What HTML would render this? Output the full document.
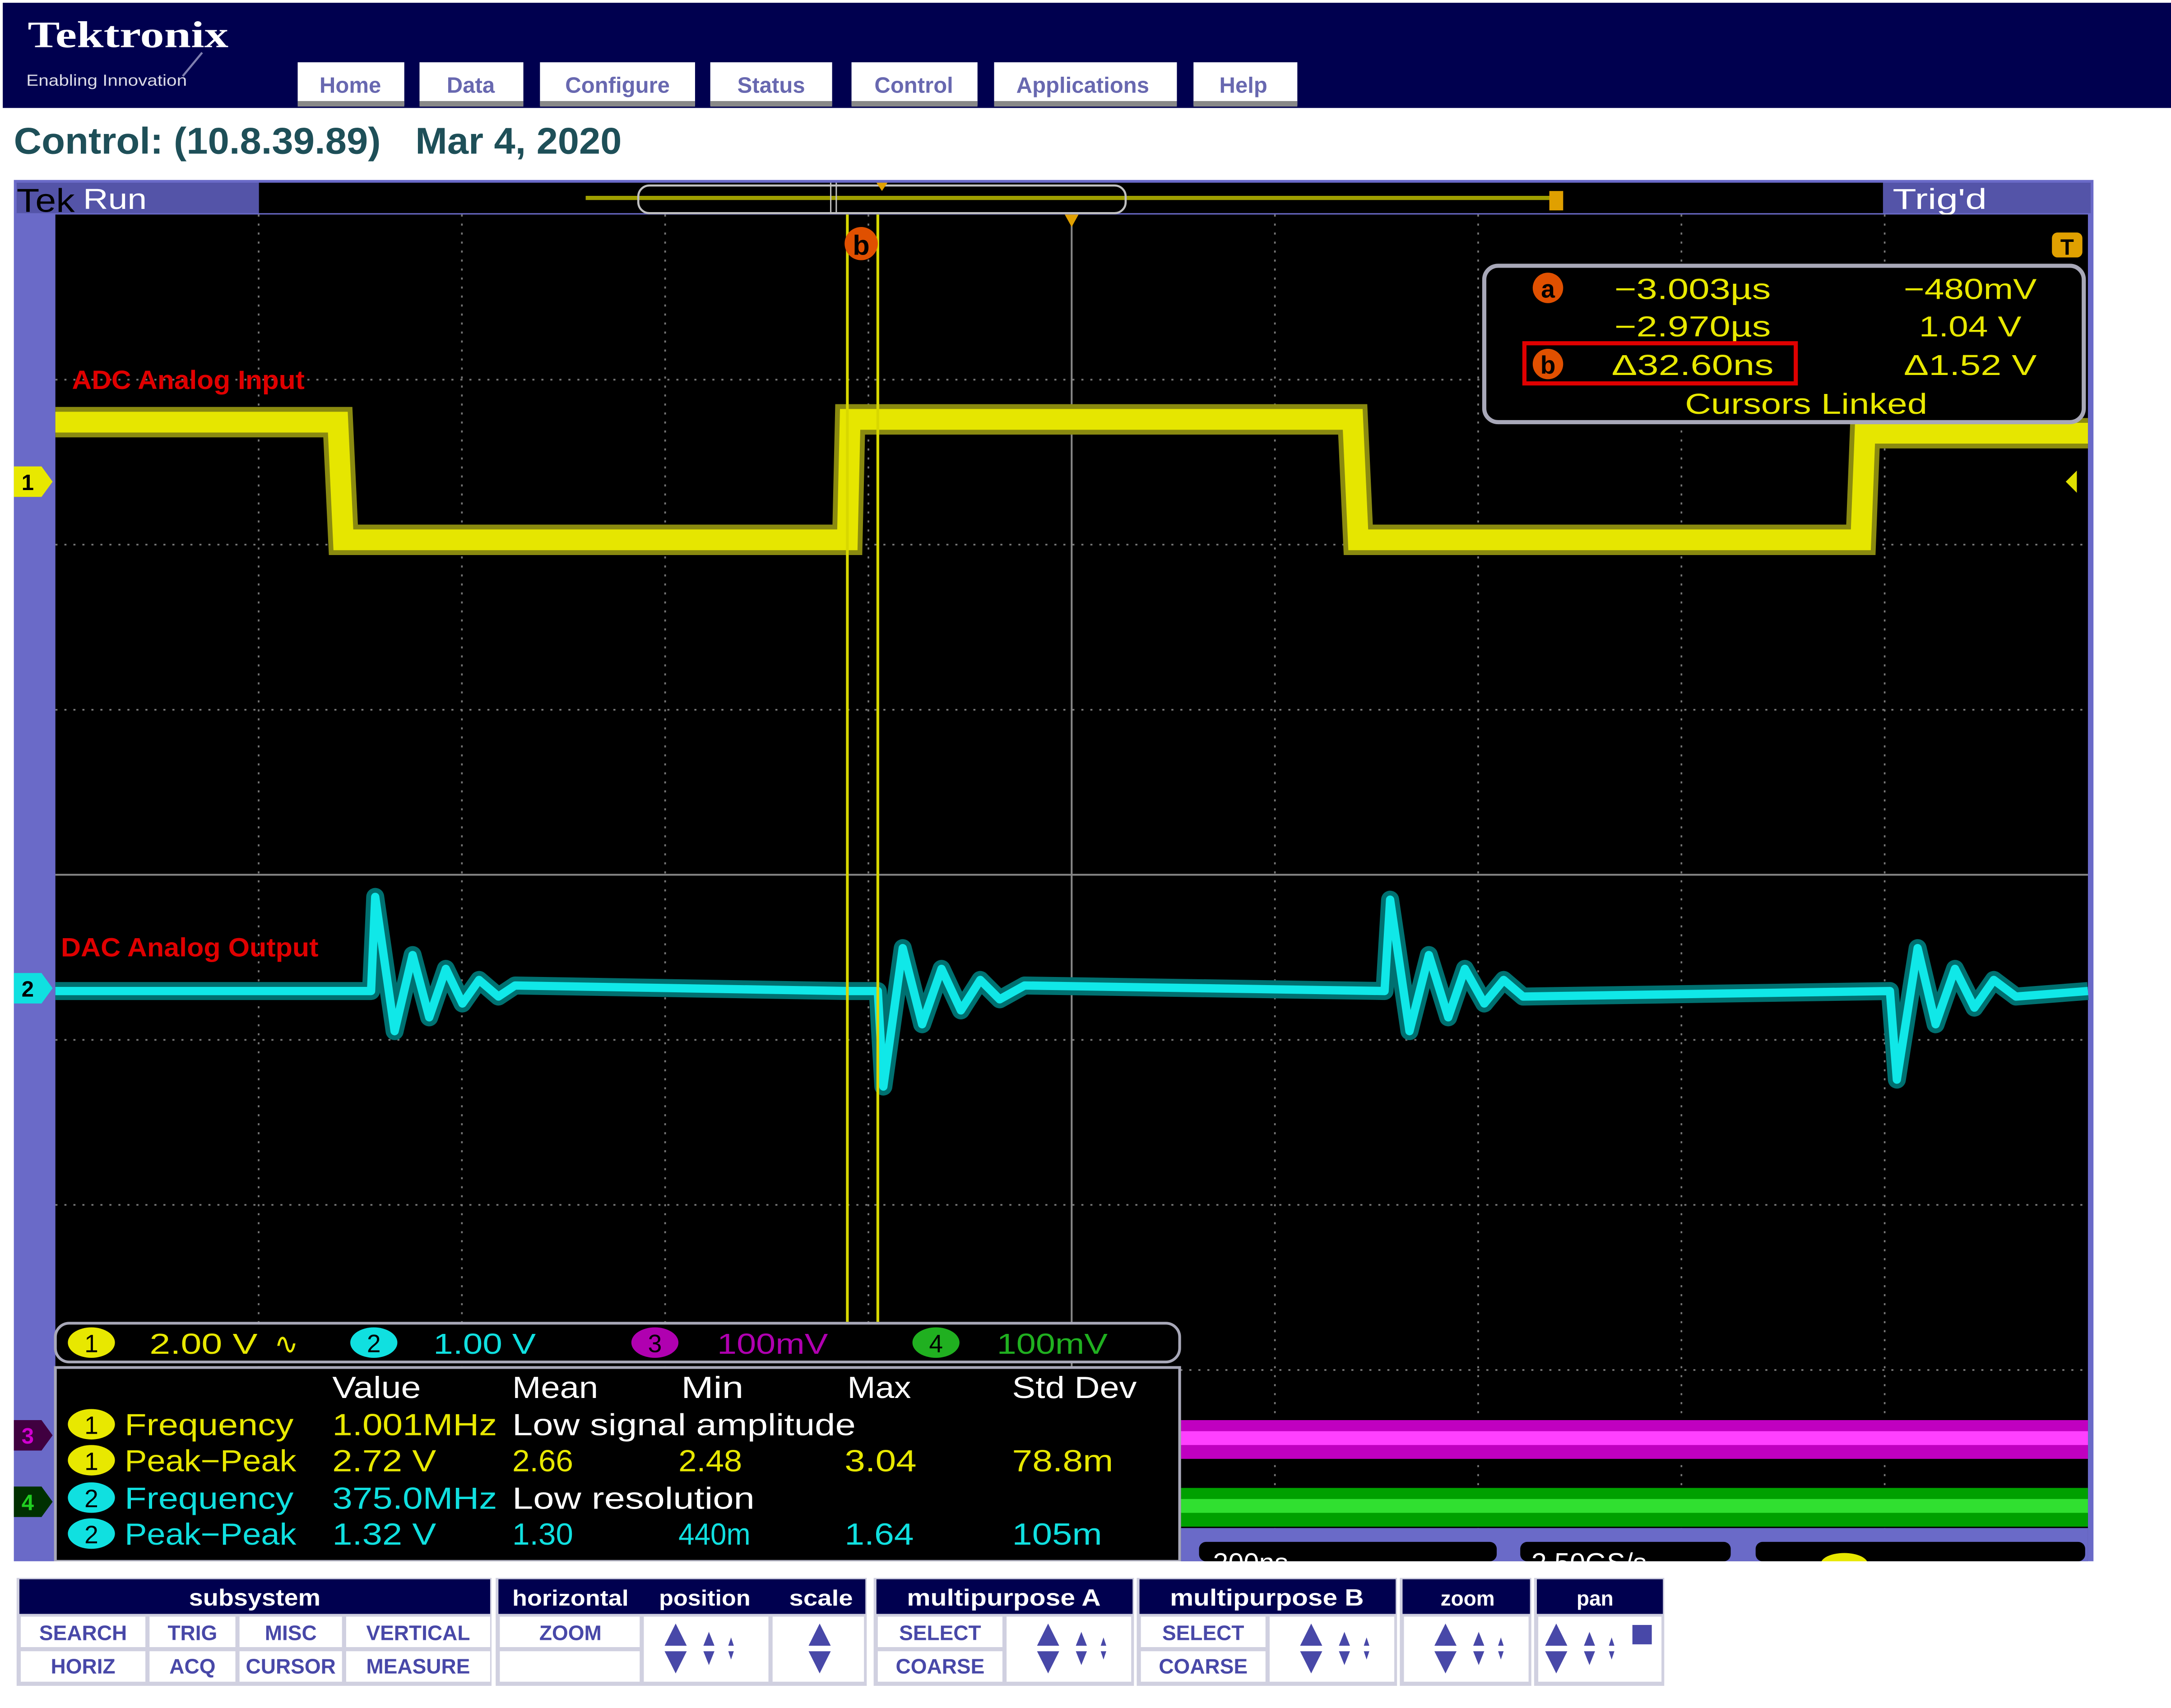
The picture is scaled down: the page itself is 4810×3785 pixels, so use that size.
<!DOCTYPE html>
<html><head><meta charset="utf-8"><style>html,body{margin:0;padding:0;background:#fff}svg{display:block}</style></head><body>
<svg xmlns="http://www.w3.org/2000/svg" xmlns:xlink="http://www.w3.org/1999/xlink" width="4810" height="3785" viewBox="0 0 1568 1234" preserveAspectRatio="none" font-family="Liberation Sans, sans-serif">
<defs>
<g id="ar3"><path d="M-8,-2 L0,-18 L8,-2Z M-8,2 L0,18 L8,2Z" fill="#4848a8"/><path d="M20,-2 L24,-12 L28,-2Z M20,2 L24,12 L28,2Z" fill="#4848a8"/><path d="M38,-2 L40,-8 L42,-2Z M38,2 L40,8 L42,2Z" fill="#4848a8"/></g>
<g id="ar1"><path d="M-8,-2 L0,-18 L8,-2Z M-8,2 L0,18 L8,2Z" fill="#4848a8"/></g>
</defs>
<rect width="1568" height="1234" fill="#fff"/>
<rect x="2" y="2" width="1566" height="76" fill="#00004f"/>
<text x="20" y="34" font-family="Liberation Serif, serif" font-weight="bold" font-size="27" fill="#fff" textLength="145" lengthAdjust="spacingAndGlyphs">Tektronix</text>
<line x1="146" y1="38" x2="132" y2="55" stroke="#8080b0" stroke-width="1.5"/>
<text x="19" y="62" font-size="11.5" fill="#dcdce8" textLength="116" lengthAdjust="spacingAndGlyphs">Enabling Innovation</text>
<g font-size="16" font-weight="bold" fill="#6868b0" text-anchor="middle">
<rect x="215" y="45" width="77" height="31" fill="#fff"/><rect x="215" y="73" width="77" height="4" fill="#888"/><text x="253" y="67">Home</text>
<rect x="303" y="45" width="75" height="31" fill="#fff"/><rect x="303" y="73" width="75" height="4" fill="#888"/><text x="340" y="67">Data</text>
<rect x="390" y="45" width="112" height="31" fill="#fff"/><rect x="390" y="73" width="112" height="4" fill="#888"/><text x="446" y="67">Configure</text>
<rect x="513" y="45" width="88" height="31" fill="#fff"/><rect x="513" y="73" width="88" height="4" fill="#888"/><text x="557" y="67">Status</text>
<rect x="615" y="45" width="91" height="31" fill="#fff"/><rect x="615" y="73" width="91" height="4" fill="#888"/><text x="660" y="67">Control</text>
<rect x="718" y="45" width="132" height="31" fill="#fff"/><rect x="718" y="73" width="132" height="4" fill="#888"/><text x="782" y="67">Applications</text>
<rect x="862" y="45" width="75" height="31" fill="#fff"/><rect x="862" y="73" width="75" height="4" fill="#888"/><text x="898" y="67">Help</text>
</g>
<text x="10" y="111" font-size="27" font-weight="bold" fill="#1e4f58" textLength="265" lengthAdjust="spacingAndGlyphs">Control: (10.8.39.89)</text>
<text x="300" y="111" font-size="27" font-weight="bold" fill="#1e4f58" textLength="149" lengthAdjust="spacingAndGlyphs">Mar 4, 2020</text>
<rect x="10" y="130" width="1502" height="998" fill="#6a6ac8"/>
<rect x="12" y="132" width="175" height="22" fill="#5454a8"/>
<rect x="187" y="132" width="1173" height="22" fill="#000"/>
<rect x="1360" y="132" width="150" height="22" fill="#5454a8"/>
<text x="12" y="153" font-size="24" fill="#000" textLength="42" lengthAdjust="spacingAndGlyphs">Tek</text>
<text x="60" y="151" font-size="21" fill="#fff" textLength="46" lengthAdjust="spacingAndGlyphs">Run</text>
<text x="1367" y="151" font-size="21" fill="#fff" textLength="68" lengthAdjust="spacingAndGlyphs">Trig'd</text>
<line x1="423" y1="143" x2="1125" y2="143" stroke="#a0a000" stroke-width="3"/>
<rect x="461" y="134" width="352" height="20" rx="8" fill="none" stroke="#c0c0c0" stroke-width="1.5"/>
<line x1="600" y1="132" x2="600" y2="154" stroke="#c0c0c0"/><line x1="604" y1="132" x2="604" y2="154" stroke="#c0c0c0"/>
<path d="M633,132 L641,132 L637,138Z" fill="#e0a000"/>
<rect x="1119" y="138" width="10" height="14" fill="#e0a000"/>
<rect x="40" y="155" width="1468" height="973" fill="#000"/>
<g stroke="#777" stroke-width="1.2" stroke-dasharray="1.5 5">
<line x1="186.8" y1="155" x2="186.8" y2="1110"/><line x1="333.6" y1="155" x2="333.6" y2="1110"/><line x1="480.4" y1="155" x2="480.4" y2="1110"/><line x1="627.2" y1="155" x2="627.2" y2="1110"/><line x1="920.8" y1="155" x2="920.8" y2="1110"/><line x1="1067.6" y1="155" x2="1067.6" y2="1110"/><line x1="1214.4" y1="155" x2="1214.4" y2="1110"/><line x1="1361.2" y1="155" x2="1361.2" y2="1110"/>
<line x1="40" y1="274.3" x2="1508" y2="274.3"/><line x1="40" y1="393.5" x2="1508" y2="393.5"/><line x1="40" y1="512.8" x2="1508" y2="512.8"/><line x1="40" y1="751.3" x2="1508" y2="751.3"/><line x1="40" y1="870.5" x2="1508" y2="870.5"/><line x1="40" y1="989.8" x2="1508" y2="989.8"/>
</g>
<g stroke="#888" stroke-width="1.3"><line x1="774" y1="155" x2="774" y2="1110"/><line x1="40" y1="632" x2="1508" y2="632"/></g>
<path d="M769,155 L779,155 L774,164Z" fill="#e0a000"/>
<path d="M40,305 L244,305 L248,390 L612,390 L614,303 L977,303 L981,390 L1344,390 L1347,313 L1508,313" fill="none" stroke="#8a8a10" stroke-width="22"/>
<path d="M40,305 L244,305 L248,390 L612,390 L614,303 L977,303 L981,390 L1344,390 L1347,313 L1508,313" fill="none" stroke="#e6e600" stroke-width="15"/>
<path d="M40,716 L268,716 L271,648 L285,745 L298,690 L310,735 L322,700 L334,725 L346,708 L360,720 L372,712 L612,716 L634,716 L638,785 L652,685 L666,740 L680,700 L694,730 L708,708 L722,722 L740,712 L1000,716 L1004,650 L1018,745 L1032,690 L1046,735 L1058,700 L1072,725 L1086,708 L1100,720 L1365,716 L1370,780 L1385,685 L1398,740 L1412,700 L1426,728 L1440,708 L1456,720 L1508,716" fill="none" stroke="#007070" stroke-width="13" stroke-linejoin="round"/>
<path d="M40,716 L268,716 L271,648 L285,745 L298,690 L310,735 L322,700 L334,725 L346,708 L360,720 L372,712 L612,716 L634,716 L638,785 L652,685 L666,740 L680,700 L694,730 L708,708 L722,722 L740,712 L1000,716 L1004,650 L1018,745 L1032,690 L1046,735 L1058,700 L1072,725 L1086,708 L1100,720 L1365,716 L1370,780 L1385,685 L1398,740 L1412,700 L1426,728 L1440,708 L1456,720 L1508,716" fill="none" stroke="#10e8e8" stroke-width="6" stroke-linejoin="round"/>
<rect x="853" y="1026" width="655" height="28" fill="#c000c0"/><rect x="853" y="1034" width="655" height="10" fill="#ff40ff"/>
<rect x="853" y="1075" width="655" height="28" fill="#00a000"/><rect x="853" y="1083" width="655" height="10" fill="#30e030"/>
<line x1="612" y1="155" x2="612" y2="955" stroke="#d8d800" stroke-width="2"/>
<line x1="634" y1="155" x2="634" y2="955" stroke="#d8d800" stroke-width="2"/>
<circle cx="622" cy="176" r="12" fill="#e05000"/><text x="622" y="184" font-size="20" font-weight="bold" fill="#000" text-anchor="middle">b</text>
<rect x="1482" y="168" width="22" height="18" rx="4" fill="#e0a000"/><text x="1493" y="184" font-size="16" font-weight="bold" fill="#000" text-anchor="middle">T</text>
<path d="M1500,340 L1500,356 L1492,348Z" fill="#e0e000"/>
<text x="52" y="281" font-size="19" font-weight="bold" fill="#e00000" textLength="168" lengthAdjust="spacingAndGlyphs">ADC Analog Input</text>
<text x="44" y="691" font-size="19" font-weight="bold" fill="#e00000" textLength="186" lengthAdjust="spacingAndGlyphs">DAC Analog Output</text>
<g font-size="16" font-weight="bold" text-anchor="middle">
<path d="M10,337 L30,337 L38,348 L30,359 L10,359Z" fill="#e8e800"/><text x="20" y="354" fill="#000">1</text>
<path d="M10,703 L30,703 L38,714 L30,725 L10,725Z" fill="#10e0e0"/><text x="20" y="720" fill="#000">2</text>
<path d="M10,1026 L30,1026 L38,1037 L30,1048 L10,1048Z" fill="#400040"/><text x="20" y="1043" fill="#d000d0">3</text>
<path d="M10,1074 L30,1074 L38,1085 L30,1096 L10,1096Z" fill="#003000"/><text x="20" y="1091" fill="#20d020">4</text>
</g>
<rect x="1072" y="192" width="433" height="113" rx="10" fill="#000" stroke="#a8a8b8" stroke-width="3"/>
<g font-size="21" fill="#e8e800">
<circle cx="1118" cy="208" r="11" fill="#e05000"/><text x="1118" y="215" font-size="18" font-weight="bold" fill="#000" text-anchor="middle">a</text>
<text x="1166" y="216" textLength="113" lengthAdjust="spacingAndGlyphs">−3.003µs</text>
<text x="1375" y="216" textLength="96" lengthAdjust="spacingAndGlyphs">−480mV</text>
<text x="1166" y="243" textLength="113" lengthAdjust="spacingAndGlyphs">−2.970µs</text>
<text x="1386" y="243" textLength="74" lengthAdjust="spacingAndGlyphs">1.04 V</text>
<rect x="1101" y="248" width="196" height="29" fill="none" stroke="#e00000" stroke-width="3"/>
<circle cx="1118" cy="263" r="11" fill="#e05000"/><text x="1118" y="270" font-size="18" font-weight="bold" fill="#000" text-anchor="middle">b</text>
<text x="1164" y="271" textLength="117" lengthAdjust="spacingAndGlyphs">Δ32.60ns</text>
<text x="1375" y="271" textLength="96" lengthAdjust="spacingAndGlyphs">Δ1.52 V</text>
<text x="1217" y="299" textLength="175" lengthAdjust="spacingAndGlyphs">Cursors Linked</text>
</g>
<rect x="40" y="956" width="812" height="28" rx="10" fill="#000" stroke="#a8a8b8" stroke-width="2"/>
<g font-size="21">
<ellipse cx="66" cy="970" rx="17" ry="11" fill="#e8e800"/><text x="66" y="977" text-anchor="middle" fill="#000" font-size="18">1</text>
<text x="108" y="978" fill="#e8e800" textLength="78" lengthAdjust="spacingAndGlyphs">2.00 V</text><text x="198" y="978" fill="#e8e800">∿</text>
<ellipse cx="270" cy="970" rx="17" ry="11" fill="#10e0e0"/><text x="270" y="977" text-anchor="middle" fill="#000" font-size="18">2</text>
<text x="313" y="978" fill="#10e0e0" textLength="74" lengthAdjust="spacingAndGlyphs">1.00 V</text>
<ellipse cx="473" cy="970" rx="17" ry="11" fill="#b000b0"/><text x="473" y="977" text-anchor="middle" fill="#000" font-size="18">3</text>
<text x="518" y="978" fill="#b000b0" textLength="80" lengthAdjust="spacingAndGlyphs">100mV</text>
<ellipse cx="676" cy="970" rx="17" ry="11" fill="#20b020"/><text x="676" y="977" text-anchor="middle" fill="#000" font-size="18">4</text>
<text x="720" y="978" fill="#20b020" textLength="80" lengthAdjust="spacingAndGlyphs">100mV</text>
</g>
<rect x="40" y="988" width="812" height="140" fill="#000" stroke="#a8a8b8" stroke-width="2"/>
<g font-size="22">
<g fill="#fff"><text x="240" y="1010" textLength="64" lengthAdjust="spacingAndGlyphs">Value</text><text x="370" y="1010" textLength="62" lengthAdjust="spacingAndGlyphs">Mean</text><text x="492" y="1010" textLength="45" lengthAdjust="spacingAndGlyphs">Min</text><text x="612" y="1010" textLength="46" lengthAdjust="spacingAndGlyphs">Max</text><text x="731" y="1010" textLength="90" lengthAdjust="spacingAndGlyphs">Std Dev</text></g>
<g font-size="18" text-anchor="middle"><ellipse cx="66" cy="1029" rx="17" ry="11" fill="#e8e800"/><text x="66" y="1036" fill="#000">1</text><ellipse cx="66" cy="1055" rx="17" ry="11" fill="#e8e800"/><text x="66" y="1062" fill="#000">1</text><ellipse cx="66" cy="1082" rx="17" ry="11" fill="#10e0e0"/><text x="66" y="1089" fill="#000">2</text><ellipse cx="66" cy="1108" rx="17" ry="11" fill="#10e0e0"/><text x="66" y="1115" fill="#000">2</text></g>
<g fill="#e8e800"><text x="90" y="1037" textLength="122" lengthAdjust="spacingAndGlyphs">Frequency</text><text x="240" y="1037" textLength="119" lengthAdjust="spacingAndGlyphs">1.001MHz</text>
<text x="90" y="1063" textLength="124" lengthAdjust="spacingAndGlyphs">Peak−Peak</text><text x="240" y="1063" textLength="75" lengthAdjust="spacingAndGlyphs">2.72 V</text><text x="370" y="1063" textLength="44" lengthAdjust="spacingAndGlyphs">2.66</text><text x="490" y="1063" textLength="46" lengthAdjust="spacingAndGlyphs">2.48</text><text x="610" y="1063" textLength="52" lengthAdjust="spacingAndGlyphs">3.04</text><text x="731" y="1063" textLength="73" lengthAdjust="spacingAndGlyphs">78.8m</text></g>
<g fill="#fff"><text x="370" y="1037" textLength="248" lengthAdjust="spacingAndGlyphs">Low signal amplitude</text><text x="370" y="1090" textLength="175" lengthAdjust="spacingAndGlyphs">Low resolution</text></g>
<g fill="#10e0e0"><text x="90" y="1090" textLength="122" lengthAdjust="spacingAndGlyphs">Frequency</text><text x="240" y="1090" textLength="119" lengthAdjust="spacingAndGlyphs">375.0MHz</text>
<text x="90" y="1116" textLength="124" lengthAdjust="spacingAndGlyphs">Peak−Peak</text><text x="240" y="1116" textLength="75" lengthAdjust="spacingAndGlyphs">1.32 V</text><text x="370" y="1116" textLength="44" lengthAdjust="spacingAndGlyphs">1.30</text><text x="490" y="1116" textLength="52" lengthAdjust="spacingAndGlyphs">440m</text><text x="610" y="1116" textLength="50" lengthAdjust="spacingAndGlyphs">1.64</text><text x="731" y="1116" textLength="65" lengthAdjust="spacingAndGlyphs">105m</text></g>
</g>
<rect x="853" y="1104" width="655" height="24" fill="#6a6ac8"/>
<rect x="866" y="1114" width="215" height="14" rx="5" fill="#000"/><text x="876" y="1136" font-size="20" fill="#fff">200ns</text>
<rect x="1098" y="1114" width="152" height="14" rx="5" fill="#000"/><text x="1106" y="1136" font-size="20" fill="#fff">2.50GS/s</text>
<rect x="1268" y="1114" width="238" height="14" rx="5" fill="#000"/><ellipse cx="1332" cy="1130" rx="17" ry="8" fill="#e8e800"/>
<rect x="0" y="1128" width="1568" height="12" fill="#fff"/>
<g font-size="15" font-weight="bold">
<rect x="12" y="1140" width="343" height="78" fill="#d0d0e0"/>
<rect x="14" y="1141" width="340" height="25" fill="#00004f"/><text x="184" y="1160" fill="#fff" text-anchor="middle" font-size="17" textLength="95" lengthAdjust="spacingAndGlyphs">subsystem</text>
<g fill="#fff"><rect x="15" y="1168" width="90" height="22"/><rect x="108" y="1168" width="62" height="22"/><rect x="173" y="1168" width="74" height="22"/><rect x="250" y="1168" width="104" height="22"/>
<rect x="15" y="1193" width="90" height="22"/><rect x="108" y="1193" width="62" height="22"/><rect x="173" y="1193" width="74" height="22"/><rect x="250" y="1193" width="104" height="22"/></g>
<g fill="#4848a8" text-anchor="middle"><text x="60" y="1185">SEARCH</text><text x="139" y="1185">TRIG</text><text x="210" y="1185">MISC</text><text x="302" y="1185">VERTICAL</text>
<text x="60" y="1209">HORIZ</text><text x="139" y="1209">ACQ</text><text x="210" y="1209">CURSOR</text><text x="302" y="1209">MEASURE</text></g>
<rect x="358" y="1140" width="268" height="78" fill="#d0d0e0"/>
<rect x="360" y="1141" width="265" height="25" fill="#00004f"/>
<g fill="#fff" font-size="16"><text x="370" y="1160" textLength="84" lengthAdjust="spacingAndGlyphs">horizontal</text><text x="476" y="1160" textLength="66" lengthAdjust="spacingAndGlyphs">position</text><text x="570" y="1160" textLength="46" lengthAdjust="spacingAndGlyphs">scale</text></g>
<g fill="#fff"><rect x="361" y="1168" width="101" height="22"/><rect x="361" y="1193" width="101" height="22"/><rect x="465" y="1168" width="90" height="47"/><rect x="558" y="1168" width="66" height="47"/></g>
<text x="412" y="1185" fill="#4848a8" text-anchor="middle">ZOOM</text>
<use xlink:href="#ar3" x="488" y="1191"/><use xlink:href="#ar1" x="592" y="1191"/>
<rect x="631" y="1140" width="188" height="78" fill="#d0d0e0"/>
<rect x="633" y="1141" width="185" height="25" fill="#00004f"/><text x="725" y="1160" fill="#fff" text-anchor="middle" font-size="17" textLength="140" lengthAdjust="spacingAndGlyphs">multipurpose A</text>
<g fill="#fff"><rect x="634" y="1168" width="90" height="22"/><rect x="634" y="1193" width="90" height="22"/><rect x="727" y="1168" width="90" height="47"/></g>
<g fill="#4848a8" text-anchor="middle"><text x="679" y="1185">SELECT</text><text x="679" y="1209">COARSE</text></g>
<use xlink:href="#ar3" x="757" y="1191"/>
<rect x="821" y="1140" width="188" height="78" fill="#d0d0e0"/>
<rect x="823" y="1141" width="185" height="25" fill="#00004f"/><text x="915" y="1160" fill="#fff" text-anchor="middle" font-size="17" textLength="140" lengthAdjust="spacingAndGlyphs">multipurpose B</text>
<g fill="#fff"><rect x="824" y="1168" width="90" height="22"/><rect x="824" y="1193" width="90" height="22"/><rect x="917" y="1168" width="90" height="47"/></g>
<g fill="#4848a8" text-anchor="middle"><text x="869" y="1185">SELECT</text><text x="869" y="1209">COARSE</text></g>
<use xlink:href="#ar3" x="947" y="1191"/>
<rect x="1011" y="1140" width="95" height="78" fill="#d0d0e0"/>
<rect x="1013" y="1141" width="92" height="25" fill="#00004f"/><text x="1060" y="1160" fill="#fff" text-anchor="middle" font-size="15">zoom</text>
<rect x="1014" y="1168" width="90" height="47" fill="#fff"/><use xlink:href="#ar3" x="1044" y="1191"/>
<rect x="1108" y="1140" width="94" height="78" fill="#d0d0e0"/>
<rect x="1110" y="1141" width="91" height="25" fill="#00004f"/><text x="1152" y="1160" fill="#fff" text-anchor="middle" font-size="15">pan</text>
<rect x="1111" y="1168" width="89" height="47" fill="#fff"/><use xlink:href="#ar3" x="1124" y="1191"/><rect x="1179" y="1174" width="14" height="14" fill="#4848a8"/>
</g>
</svg>
</body></html>
